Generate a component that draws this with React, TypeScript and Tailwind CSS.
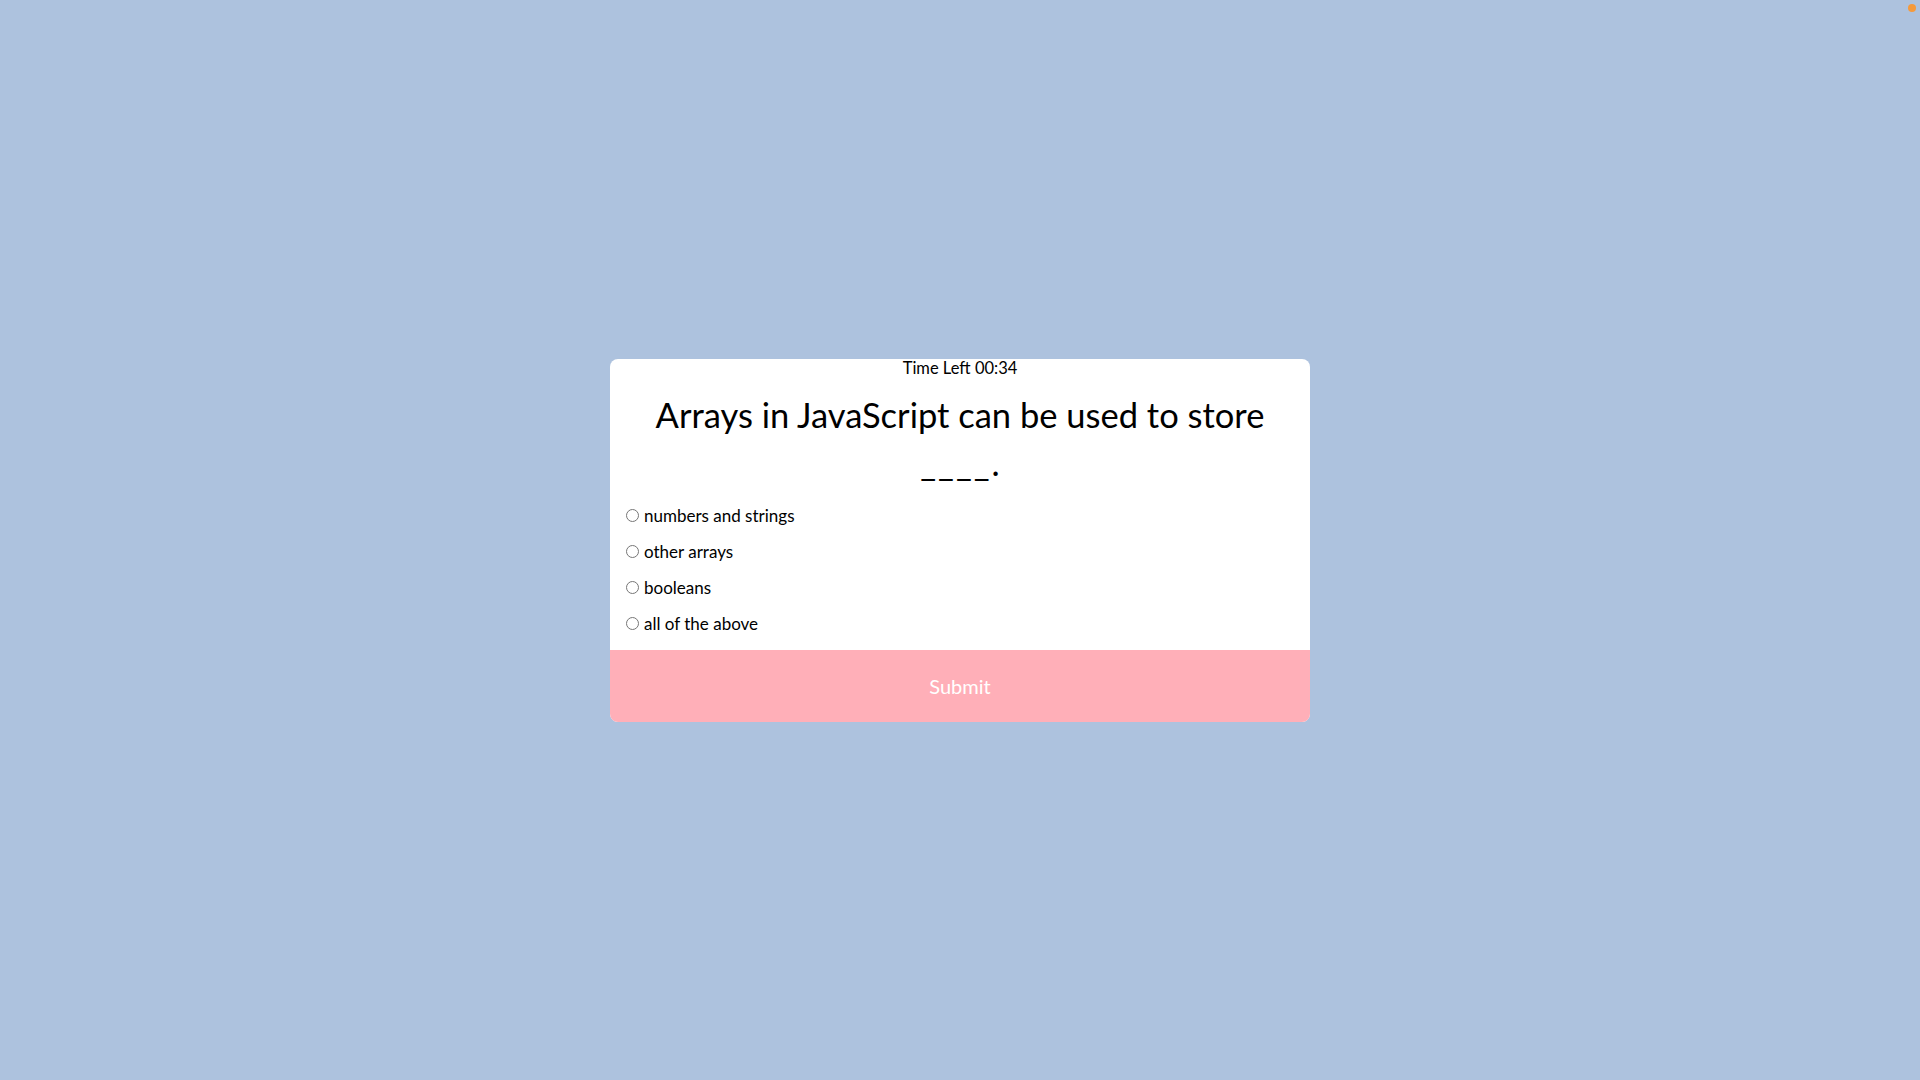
import React from "react";

export default function App() {
  const options = ["numbers and strings", "other arrays", "booleans", "all of the above"];
  return (
    <div
      className="relative w-full h-screen bg-[#adc2de] flex items-center justify-center"
      style={{ fontFamily: "Lato, 'Noto Sans', sans-serif" }}
    >
      <div className="absolute top-[4px] right-[4px] w-[8px] h-[8px] rounded-full bg-[#f59a3c]" />
      <div className="w-[700px] bg-white rounded-lg overflow-hidden flex flex-col">
        <div className="text-center text-[16.5px] leading-[19px] text-black">Time Left 00:34</div>
        <h1 className="mt-[13px] px-10 text-center text-[34.5px] leading-[48px] text-black">
          Arrays in JavaScript can be used to store <span className="tracking-[2px]">____</span>.
        </h1>
        <ul className="mt-[11px] flex flex-col">
          {options.map((o) => (
            <li key={o} className="h-[36px] flex items-center pl-4">
              <label className="flex items-center gap-[5px] text-[17px] text-black">
                <input type="radio" name="answer" className="m-0 w-[13px] h-[13px]" />
                {o}
              </label>
            </li>
          ))}
        </ul>
        <button className="mt-[8px] h-[72px] w-full bg-[#ffafb8] text-white text-[20px]">Submit</button>
      </div>
    </div>
  );
}
